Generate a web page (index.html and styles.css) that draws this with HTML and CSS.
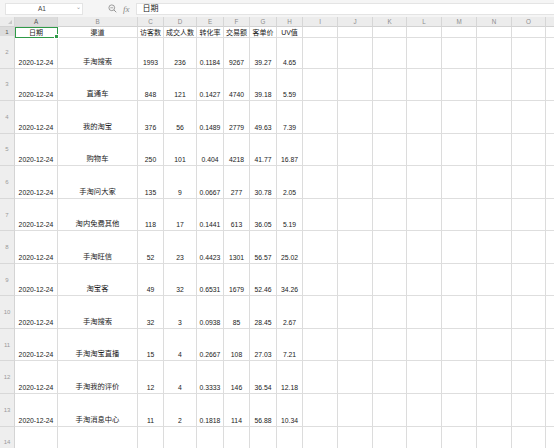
FILE: index.html
```html
<!DOCTYPE html>
<html lang="zh">
<head>
<meta charset="utf-8">
<title>Sheet</title>
<link rel="stylesheet" href="styles.css">
</head>
<body>
<div class="app">
  <div class="toolbar">
    <div class="namebox"><span class="nb-text">A1</span><span class="nb-arrow">⌄</span></div>
    <svg class="zoom-icon" viewBox="0 0 10 10" width="9" height="9"><circle cx="4.2" cy="4.2" r="3.2" fill="none" stroke="#8a8a8a" stroke-width="0.9"/><line x1="6.6" y1="6.6" x2="9.2" y2="9.2" stroke="#8a8a8a" stroke-width="1"/><line x1="2.6" y1="4.2" x2="5.8" y2="4.2" stroke="#8a8a8a" stroke-width="0.8"/></svg>
    <span class="fx">fx</span>
    <div class="formula">日期</div>
  </div>
  <div class="sheet">
    <div class="row hdr">
      <div class="cell corner"><span class="tri"></span></div>
      <div class="cell ch sel">A</div><div class="cell ch">B</div><div class="cell ch">C</div><div class="cell ch">D</div><div class="cell ch">E</div><div class="cell ch">F</div><div class="cell ch">G</div><div class="cell ch">H</div><div class="cell ch">I</div><div class="cell ch">J</div><div class="cell ch">K</div><div class="cell ch">L</div><div class="cell ch">M</div><div class="cell ch">N</div><div class="cell ch">O</div><div class="cell ch"></div>
    </div>
    <div class="row r1">
      <div class="cell rh sel">1</div>
      <div class="cell active">日期<span class="handle"></span></div><div class="cell">渠道</div><div class="cell">访客数</div><div class="cell">成交人数</div><div class="cell">转化率</div><div class="cell">交易额</div><div class="cell">客单价</div><div class="cell">UV值</div><div class="cell"></div><div class="cell"></div><div class="cell"></div><div class="cell"></div><div class="cell"></div><div class="cell"></div><div class="cell"></div><div class="cell"></div>
    </div>
    <div class="row rd">
      <div class="cell rh">2</div>
      <div class="cell">2020-12-24</div><div class="cell cn">手淘搜索</div><div class="cell">1993</div><div class="cell">236</div><div class="cell">0.1184</div><div class="cell">9267</div><div class="cell">39.27</div><div class="cell">4.65</div><div class="cell"></div><div class="cell"></div><div class="cell"></div><div class="cell"></div><div class="cell"></div><div class="cell"></div><div class="cell"></div><div class="cell"></div>
    </div>
    <div class="row rd">
      <div class="cell rh">3</div>
      <div class="cell">2020-12-24</div><div class="cell cn">直通车</div><div class="cell">848</div><div class="cell">121</div><div class="cell">0.1427</div><div class="cell">4740</div><div class="cell">39.18</div><div class="cell">5.59</div><div class="cell"></div><div class="cell"></div><div class="cell"></div><div class="cell"></div><div class="cell"></div><div class="cell"></div><div class="cell"></div><div class="cell"></div>
    </div>
    <div class="row rd">
      <div class="cell rh">4</div>
      <div class="cell">2020-12-24</div><div class="cell cn">我的淘宝</div><div class="cell">376</div><div class="cell">56</div><div class="cell">0.1489</div><div class="cell">2779</div><div class="cell">49.63</div><div class="cell">7.39</div><div class="cell"></div><div class="cell"></div><div class="cell"></div><div class="cell"></div><div class="cell"></div><div class="cell"></div><div class="cell"></div><div class="cell"></div>
    </div>
    <div class="row rd">
      <div class="cell rh">5</div>
      <div class="cell">2020-12-24</div><div class="cell cn">购物车</div><div class="cell">250</div><div class="cell">101</div><div class="cell">0.404</div><div class="cell">4218</div><div class="cell">41.77</div><div class="cell">16.87</div><div class="cell"></div><div class="cell"></div><div class="cell"></div><div class="cell"></div><div class="cell"></div><div class="cell"></div><div class="cell"></div><div class="cell"></div>
    </div>
    <div class="row rd">
      <div class="cell rh">6</div>
      <div class="cell">2020-12-24</div><div class="cell cn">手淘问大家</div><div class="cell">135</div><div class="cell">9</div><div class="cell">0.0667</div><div class="cell">277</div><div class="cell">30.78</div><div class="cell">2.05</div><div class="cell"></div><div class="cell"></div><div class="cell"></div><div class="cell"></div><div class="cell"></div><div class="cell"></div><div class="cell"></div><div class="cell"></div>
    </div>
    <div class="row rd">
      <div class="cell rh">7</div>
      <div class="cell">2020-12-24</div><div class="cell cn">淘内免费其他</div><div class="cell">118</div><div class="cell">17</div><div class="cell">0.1441</div><div class="cell">613</div><div class="cell">36.05</div><div class="cell">5.19</div><div class="cell"></div><div class="cell"></div><div class="cell"></div><div class="cell"></div><div class="cell"></div><div class="cell"></div><div class="cell"></div><div class="cell"></div>
    </div>
    <div class="row rd">
      <div class="cell rh">8</div>
      <div class="cell">2020-12-24</div><div class="cell cn">手淘旺信</div><div class="cell">52</div><div class="cell">23</div><div class="cell">0.4423</div><div class="cell">1301</div><div class="cell">56.57</div><div class="cell">25.02</div><div class="cell"></div><div class="cell"></div><div class="cell"></div><div class="cell"></div><div class="cell"></div><div class="cell"></div><div class="cell"></div><div class="cell"></div>
    </div>
    <div class="row rd">
      <div class="cell rh">9</div>
      <div class="cell">2020-12-24</div><div class="cell cn">淘宝客</div><div class="cell">49</div><div class="cell">32</div><div class="cell">0.6531</div><div class="cell">1679</div><div class="cell">52.46</div><div class="cell">34.26</div><div class="cell"></div><div class="cell"></div><div class="cell"></div><div class="cell"></div><div class="cell"></div><div class="cell"></div><div class="cell"></div><div class="cell"></div>
    </div>
    <div class="row rd">
      <div class="cell rh">10</div>
      <div class="cell">2020-12-24</div><div class="cell cn">手淘搜索</div><div class="cell">32</div><div class="cell">3</div><div class="cell">0.0938</div><div class="cell">85</div><div class="cell">28.45</div><div class="cell">2.67</div><div class="cell"></div><div class="cell"></div><div class="cell"></div><div class="cell"></div><div class="cell"></div><div class="cell"></div><div class="cell"></div><div class="cell"></div>
    </div>
    <div class="row rd">
      <div class="cell rh">11</div>
      <div class="cell">2020-12-24</div><div class="cell cn">手淘淘宝直播</div><div class="cell">15</div><div class="cell">4</div><div class="cell">0.2667</div><div class="cell">108</div><div class="cell">27.03</div><div class="cell">7.21</div><div class="cell"></div><div class="cell"></div><div class="cell"></div><div class="cell"></div><div class="cell"></div><div class="cell"></div><div class="cell"></div><div class="cell"></div>
    </div>
    <div class="row rd">
      <div class="cell rh">12</div>
      <div class="cell">2020-12-24</div><div class="cell cn">手淘我的评价</div><div class="cell">12</div><div class="cell">4</div><div class="cell">0.3333</div><div class="cell">146</div><div class="cell">36.54</div><div class="cell">12.18</div><div class="cell"></div><div class="cell"></div><div class="cell"></div><div class="cell"></div><div class="cell"></div><div class="cell"></div><div class="cell"></div><div class="cell"></div>
    </div>
    <div class="row rd">
      <div class="cell rh">13</div>
      <div class="cell">2020-12-24</div><div class="cell cn">手淘消息中心</div><div class="cell">11</div><div class="cell">2</div><div class="cell">0.1818</div><div class="cell">114</div><div class="cell">56.88</div><div class="cell">10.34</div><div class="cell"></div><div class="cell"></div><div class="cell"></div><div class="cell"></div><div class="cell"></div><div class="cell"></div><div class="cell"></div><div class="cell"></div>
    </div>
    <div class="row rd">
      <div class="cell rh">14</div>
      <div class="cell"></div><div class="cell"></div><div class="cell"></div><div class="cell"></div><div class="cell"></div><div class="cell"></div><div class="cell"></div><div class="cell"></div><div class="cell"></div><div class="cell"></div><div class="cell"></div><div class="cell"></div><div class="cell"></div><div class="cell"></div><div class="cell"></div><div class="cell"></div>
    </div>
  </div>
</div>
</body>
</html>
```
FILE: styles.css
```css
html, body {
  margin: 0;
  padding: 0;
  background: #ffffff;
}
body {
  font-family: "Liberation Sans", "Noto Sans CJK SC", sans-serif;
  color: #1a1a1a;
}
.app {
  width: 554px;
  height: 448px;
  overflow: hidden;
}
.toolbar {
  height: 17px;
  display: flex;
  align-items: center;
  background: #f5f5f5;
  box-sizing: border-box;
  padding-left: 5px;
}
.namebox {
  width: 78px;
  height: 12px;
  box-sizing: border-box;
  background: #fff;
  border: 1px solid #e4e4e4;
  display: flex;
  align-items: center;
  justify-content: space-between;
  padding: 0 1px 0 32px;
  font-size: 6.5px;
  color: #444;
}
.nb-arrow {
  font-size: 6px;
  color: #999;
  line-height: 6px;
  margin-top: -3px;
}
.zoom-icon {
  margin-left: 25px;
}
.fx {
  margin-left: 6px;
  font-family: "Liberation Serif", serif;
  font-style: italic;
  font-size: 9px;
  color: #888;
}
.formula {
  margin-left: 6px;
  flex: 1;
  height: 12px;
  box-sizing: border-box;
  background: #fff;
  border-left: 1px solid #e4e4e4;
  border-top: 1px solid #e4e4e4;
  border-bottom: 1px solid #e4e4e4;
  padding-left: 6px;
  font-size: 8px;
  line-height: 10px;
  color: #222;
}
.row {
  display: grid;
  grid-template-columns: 15px 43px 80px 26px 33px 27px 26px 27px 26px 35px 35px 34px 35px 35px 35px 34px 35px;
}
.cell {
  box-sizing: border-box;
  border-right: 1px solid #dcdcdc;
  border-bottom: 1px solid #dedede;
  display: flex;
  justify-content: center;
  white-space: nowrap;
  overflow: visible;
  position: relative;
  font-size: 6.8px;
}
.hdr {
  height: 10px;
}
.hdr .cell {
  background: #ececec;
  color: #8c8c8c;
  align-items: center;
  font-size: 6.3px;
  border-right-color: #d6d6d6;
  border-bottom-color: #d2d2d2;
}
.hdr .cell.sel {
  background: #dcdcdc;
  color: #555;
}
.corner {
  position: relative;
}
.tri {
  position: absolute;
  right: 2px;
  bottom: 2px;
  width: 0;
  height: 0;
  border-left: 4px solid transparent;
  border-bottom: 4px solid #c8c8c8;
}
.r1 {
  height: 9px;
}
.r1 .cell {
  align-items: center;
  font-size: 7px;
}
.rd {
  height: 32.56px;
}
.rd .cell {
  align-items: flex-end;
  padding-bottom: 2px;
}
.rh {
  background: #eeeeee;
  color: #9a9a9a;
  font-size: 6px;
  border-right-color: #d4d4d4;
  border-bottom-color: #d8d8d8;
}
.r1 .cell.rh {
  font-size: 6px;
}
.rd .cell.rh {
  align-items: center;
  padding-bottom: 0;
  font-size: 6px;
}
.rh.sel {
  background: #dcdcdc;
  color: #555;
}
.rd .cell.cn {
  font-size: 7.3px;
}
.active {
  outline: 1.5px solid #2f9a48;
  outline-offset: -1px;
  z-index: 2;
}
.handle {
  position: absolute;
  right: -2px;
  bottom: -2px;
  width: 3px;
  height: 3px;
  background: #2f9a48;
  border: 0.5px solid #fff;
}
```
